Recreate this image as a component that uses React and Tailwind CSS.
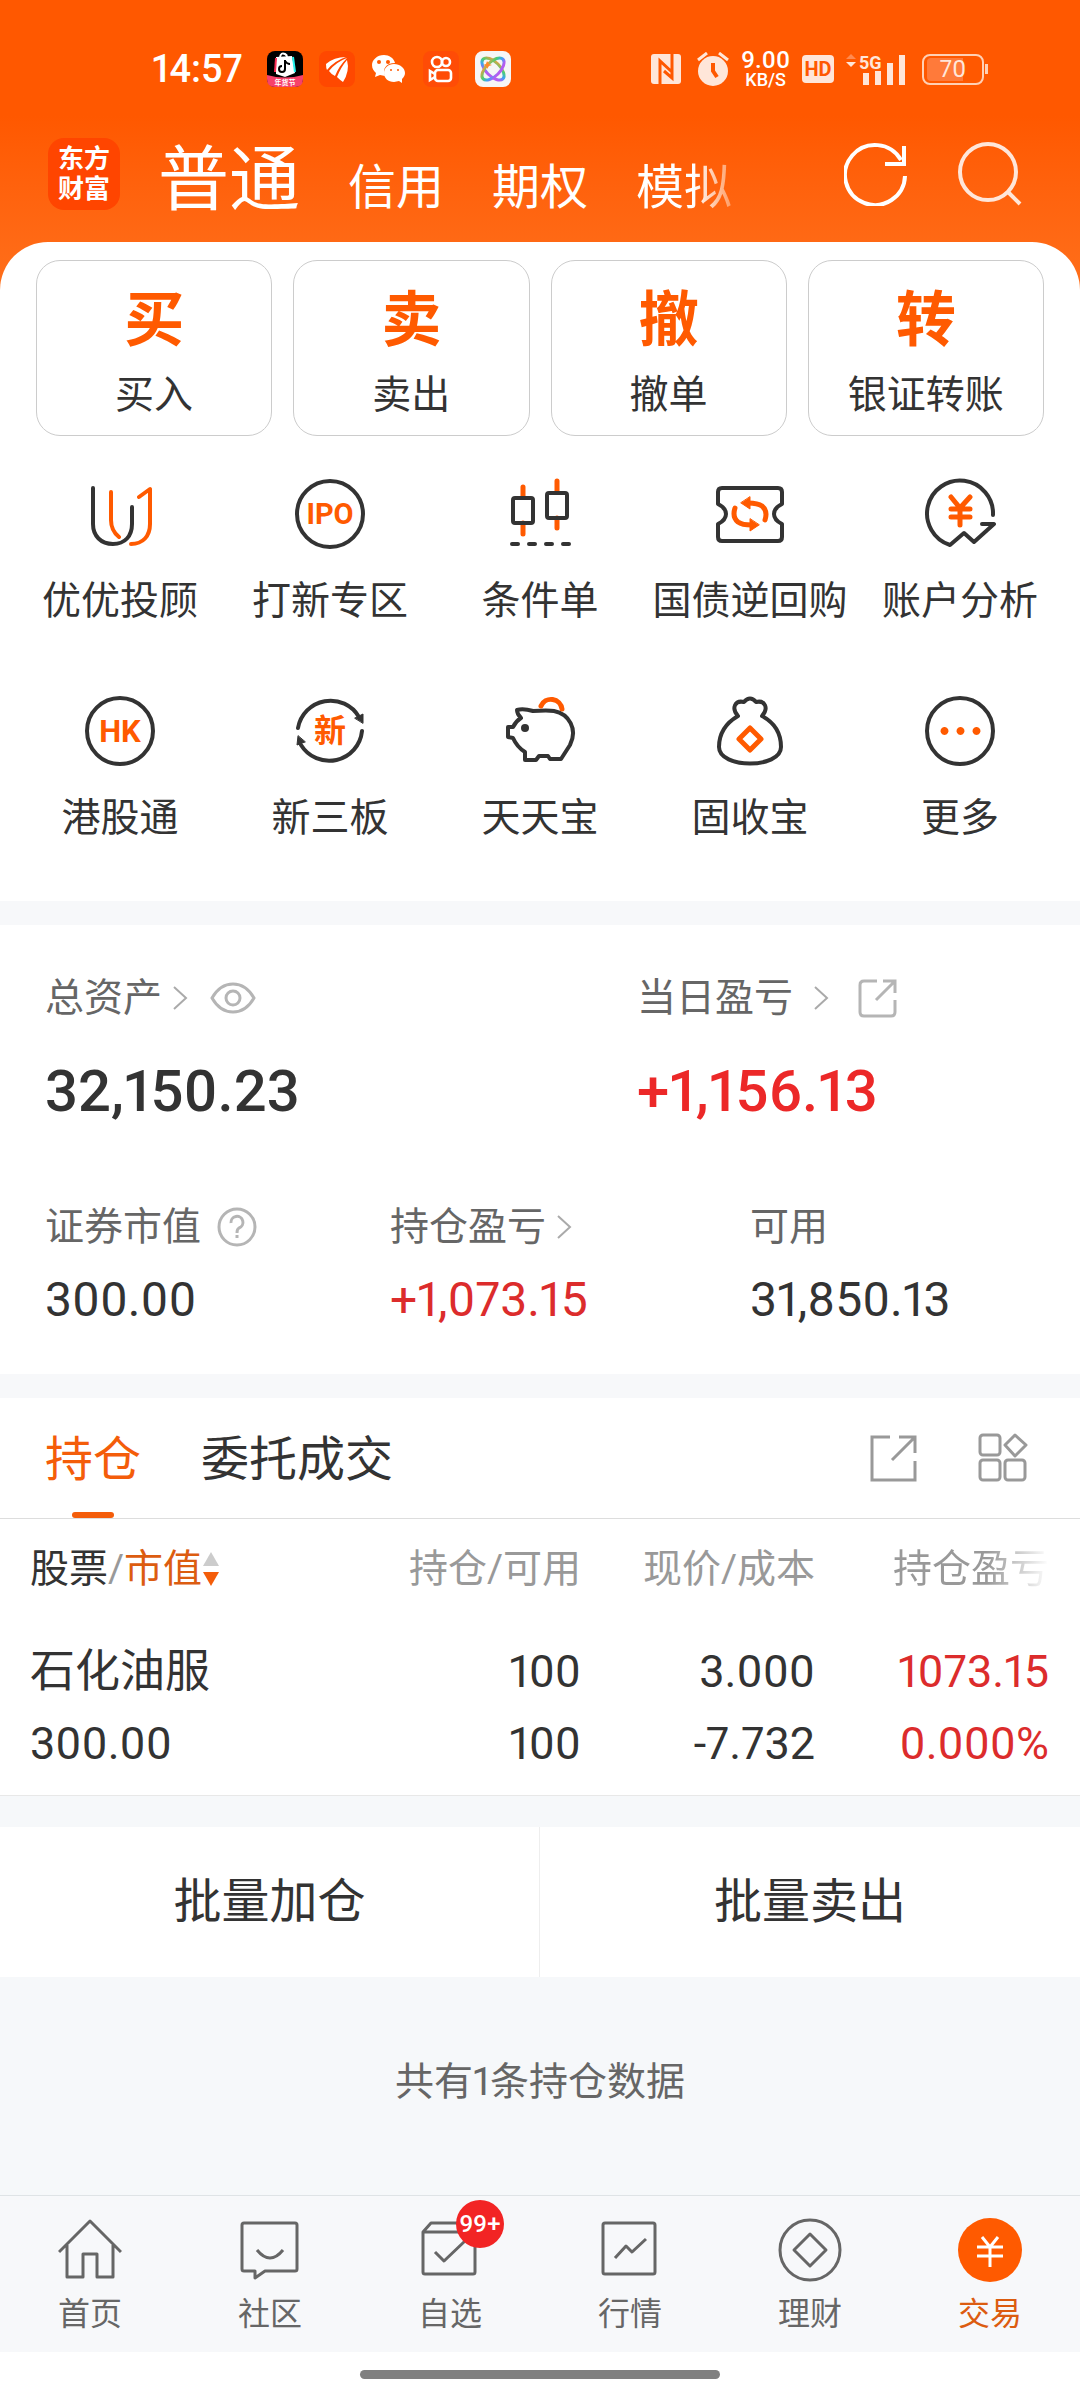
import React, { useState } from 'react';

const Yuan = ({ className, width }) => (
  <path d="M27 19L36 30L46 19M36 30V47M27 31H46M27 39H46" fill="none" className={className} strokeWidth={width} />
);

const quickActions = [
  { mark: '买', label: '买入' },
  { mark: '卖', label: '卖出' },
  { mark: '撤', label: '撤单' },
  { mark: '转', label: '银证转账' },
];

const services = [
  {
    label: '优优投顾',
    icon: (
      <>
        <path d="M9 10V46C9 58 17 66 29 66S48 58 48 46V29" />
        <path d="M27 14V42C27 50 30 55 35 59M55 19L66 11V46C66 58 59 66 47 66" className="stroke-[#ff5a00]" />
      </>
    ),
  },
  {
    label: '打新专区',
    icon: (
      <>
        <circle cx="36" cy="36" r="33" />
        <text x="36" y="46" textAnchor="middle" fontSize="29" fontWeight="700" className="fill-[#ff5a00] stroke-none">IPO</text>
      </>
    ),
  },
  {
    label: '条件单',
    icon: (
      <>
        <path d="M19 9V19M19 45V56M53 3V14M53 40V50" className="stroke-[#ff5a00]" strokeWidth="5" />
        <rect x="9" y="20" width="20" height="25" rx="2" />
        <rect x="43" y="15" width="20" height="25" rx="2" />
        <path d="M8 66H14M25 66H31M42 66H48M59 66H65" />
      </>
    ),
  },
  {
    label: '国债逆回购',
    icon: (
      <>
        <path d="M8 10H64Q68 10 68 14V26Q60 30 60 36T68 46V59Q68 63 64 63H8Q4 63 4 59V46Q12 42 12 36T4 26V14Q4 10 8 10Z" />
        <path d="M21 30Q18 39 24 44Q28 47 38 47M51 42Q54 33 48 28Q44 25 34 25" className="stroke-[#ff5a00]" strokeWidth="5" />
        <path d="M36 19V31L27 25ZM36 41V53L45 47Z" className="fill-[#ff5a00] stroke-[#ff5a00]" strokeWidth="1" />
      </>
    ),
  },
  {
    label: '账户分析',
    icon: (
      <>
        <path d="M69 37A33 33 0 1 0 26 67L40 55L50 64L70 46H58" />
        <Yuan className="stroke-[#ff5a00]" width="5" />
      </>
    ),
  },
  {
    label: '港股通',
    icon: (
      <>
        <circle cx="36" cy="36" r="33" />
        <text x="36" y="47" textAnchor="middle" fontSize="31" fontWeight="700" className="fill-[#ff5a00] stroke-none">HK</text>
      </>
    ),
  },
  {
    label: '新三板',
    icon: (
      <>
        <path d="M4 33A33 33 0 0 1 65 22M68 36A33 33 0 0 1 7 50" />
        <path d="M61 23L69 19V28ZM11 47L3 50L4 41Z" className="fill-[#333]" strokeWidth="1" />
        <text x="36" y="47" textAnchor="middle" fontSize="32" fontWeight="700" className="fill-[#ff5a00] stroke-none">新</text>
      </>
    ),
  },
  {
    label: '天天宝',
    icon: (
      <>
        <path d="M13 15Q19 13 29 16Q44 15 50 16C65 19 74 34 66 50L57 64H46L44 61H35L32 65H21V57Q13 52 9 43L4 42V32H9Q12 26 17 23Q13 19 13 15Z" />
        <circle cx="21" cy="33" r="4" className="fill-[#333] stroke-none" />
        <path d="M37 11A11 11 0 0 1 58 14" className="stroke-[#ff5a00]" strokeWidth="5" />
      </>
    ),
  },
  {
    label: '固收宝',
    icon: (
      <>
        <path d="M24 21C17 13 21 5 30 7Q36 0 42 7C51 5 55 13 48 21C61 28 67 39 67 52C67 74 5 74 5 52C5 39 12 28 24 21Z" />
        <path d="M36 33L47 44L36 55L25 44Z" className="stroke-[#ff5a00]" strokeWidth="5" />
      </>
    ),
  },
  {
    label: '更多',
    icon: (
      <>
        <circle cx="36" cy="36" r="33" />
        <path d="M20 32a4 4 0 1 0 1 0ZM36 32a4 4 0 1 0 1 0ZM52 32a4 4 0 1 0 1 0Z" className="fill-[#ff5a00] stroke-none" />
      </>
    ),
  },
];

const navItems = [
  { label: '首页', icon: <path d="M1 34L32 3L63 34M9 27V59H25V36H39V59H55V27" /> },
  {
    label: '社区',
    icon: <path d="M6 5H57Q59 5 59 7V51Q59 53 57 53H27L17 60V53H6Q4 53 4 51V7Q4 5 6 5ZM19 32Q32 48 45 32" />,
  },
  {
    label: '自选',
    badge: '99+',
    icon: <path d="M5 14L13 5H49L57 14V54Q57 56 55 56H7Q5 56 5 54ZH57M17 34L26 43L47 23" />,
  },
  {
    label: '行情',
    icon: <path d="M7 5H55Q57 5 57 7V54Q57 56 55 56H7Q5 56 5 54V7Q5 5 7 5ZM17 40L28 28L34 34L48 21" />,
  },
  {
    label: '理财',
    icon: (
      <>
        <circle cx="32" cy="32" r="30" />
        <path d="M32 16L48 32L32 48L16 32Z" />
      </>
    ),
  },
  {
    label: '交易',
    active: true,
    icon: (
      <>
        <circle cx="32" cy="32" r="32" className="fill-[#ff5a00] stroke-none" />
        <path d="M24 19L32 29L40 19M32 29V49M19 29H45M19 38H45" className="stroke-white" />
      </>
    ),
  },
];

const Chevron = () => (
  <svg className="h-6 w-4" viewBox="0 0 16 24" fill="none" stroke="#aaa" strokeWidth="2">
    <path d="M2 1L14 12L2 23" />
  </svg>
);

function StatusBar() {
  return (
    <div className="flex h-[120px] items-center justify-between pt-[18px] pr-[92px] pl-[152px] text-white">
      <div className="flex items-center gap-4">
        <span className="mr-2 text-[38px] leading-[40px] font-medium">14:57</span>
        <svg className="size-9" viewBox="0 0 36 36">
          <rect width="36" height="36" rx="8" fill="#000" />
          <path d="M0 24Q18 29 36 24V28Q36 36 28 36H8Q0 36 0 28Z" fill="#f7416b" />
          <path d="M9 6L25 5L28 22L18 26L9 23Z" fill="#fff" />
          <path d="M9 7L8 21" stroke="#fe2c55" strokeWidth="2" />
          <path d="M26 6L28 21" stroke="#25f4ee" strokeWidth="2" />
          <path d="M13 6Q14 1 18 3Q20 4 20 6" fill="none" stroke="#fff" strokeWidth="2" />
          <path d="M18 9V18A3 3 0 1 1 15 15M18 10Q20 13 23 13" fill="none" stroke="#000" strokeWidth="2" />
          <text x="18" y="34" fontSize="7" textAnchor="middle" fill="#fff" fontWeight="700">年货节</text>
        </svg>
        <svg className="size-9" viewBox="0 0 36 36">
          <rect width="36" height="36" rx="8" fill="#ff4800" />
          <path d="M7 13Q15 6 27 6Q15 10 8 19Q7 17 7 13ZM10 20Q17 11 28 7Q20 15 16 25Q12 23 10 20ZM18 26Q22 16 28 9Q31 20 24 31Q21 29 18 26Z" fill="#fff" />
        </svg>
        <svg className="size-9" viewBox="0 0 36 36" fill="#fff">
          <path d="M13 4C6 4 1 9 1 14C1 18 3 20 5 22L4 26L9 24L14 25C11 18 15 12 24 12C23 7 18 4 13 4Z" />
          <path d="M23 13C17 13 13 17 13 22S17 31 23 31L28 30L31 32L31 28C33 26 34 24 34 22C34 17 29 13 23 13Z" />
          <g fill="#ff5800">
            <circle cx="8" cy="11" r="2" />
            <circle cx="17" cy="11" r="2" />
            <circle cx="20" cy="19" r="1" />
            <circle cx="27" cy="19" r="1" />
          </g>
        </svg>
        <svg className="size-9" viewBox="0 0 36 36">
          <rect width="36" height="36" rx="8" fill="#ff4c06" />
          <g fill="none" stroke="#fff" strokeWidth="2.6">
            <circle cx="14" cy="11" r="5" />
            <circle cx="23" cy="11" r="4" />
            <rect x="12" y="19" width="16" height="11" rx="3" />
            <path d="M12 23L7 20V29L12 26" />
          </g>
        </svg>
        <svg className="size-9" viewBox="0 0 36 36">
          <defs>
            <linearGradient id="orbit" x1="0" y1="0" x2="0.4" y2="1">
              <stop offset="0" stopColor="#ff9a3c" />
              <stop offset="0.4" stopColor="#4fcf70" />
              <stop offset="0.7" stopColor="#3aa5f5" />
              <stop offset="1" stopColor="#b65cf0" />
            </linearGradient>
          </defs>
          <rect width="36" height="36" rx="8" fill="#f6f6f6" />
          <g fill="none" stroke="url(#orbit)" strokeWidth="3">
            <ellipse cx="18" cy="18" rx="14" ry="7" transform="rotate(45 18 18)" />
            <ellipse cx="18" cy="18" rx="14" ry="7" transform="rotate(-45 18 18)" />
          </g>
          <path d="M12 10L14 13L17 14L14 15L12 18L11 15L8 14L11 13Z" fill="#ff8a2a" />
        </svg>
      </div>
      <div className="flex items-center gap-3">
        <svg className="mr-1 h-[30px] w-[30px]" viewBox="0 0 30 30">
          <rect width="30" height="30" rx="3" fill="#ffe6d9" />
          <path d="M9 30V7L21 18M21 0V24L13 17" fill="none" stroke="#ff5800" strokeWidth="3" />
        </svg>
        <svg className="h-[34px] w-8" viewBox="0 0 32 34">
          <circle cx="16" cy="19" r="15" fill="#ffe6d9" />
          <path d="M1 8L10 1M31 8L22 1" stroke="#ffe6d9" strokeWidth="3" />
          <path d="M16 11V19L20 25" fill="none" stroke="#ff5800" strokeWidth="4" />
        </svg>
        <div className="flex flex-col items-center font-medium">
          <span className="text-[24px] leading-[22px]">9.00</span>
          <span className="text-[18px] leading-[18px]">KB/S</span>
        </div>
        <span className="flex h-7 w-8 items-center justify-center rounded bg-[#ffe6d9] text-[20px] leading-none font-bold text-[#ff5800]">HD</span>
        <svg className="h-9 w-[60px]" viewBox="0 0 60 36">
          <path d="M0 8L5 3L10 8Z" fill="#ff8a50" />
          <path d="M0 11H10L5 16Z" fill="#ffe6d9" />
          <path d="M17 22h6v12h-6ZM29 20h6v14h-6ZM41 12h6v22h-6ZM53 4h6v30h-6Z" fill="#ffe6d9" />
          <text x="13" y="18" fontSize="18" fontWeight="700" fill="#ffe6d9">5G</text>
        </svg>
        <div className="ml-1 flex items-center">
          <span className="flex h-[31px] w-[62px] items-center justify-center rounded-lg border-2 border-[#ffd0b5] text-[24px] leading-none text-[#ffe6d9]">
            <span className="w-[52px] rounded bg-gradient-to-r from-[#ff7a3a] from-70% to-transparent to-70% text-center leading-[23px]">70</span>
          </span>
          <span className="ml-px h-2.5 w-[3px] bg-[#ffd0b5]" />
        </div>
      </div>
    </div>
  );
}

function Header() {
  return (
    <div className="flex h-[122px] items-start pt-[18px] pr-[58px] pl-12 text-white">
      <div className="flex size-[72px] flex-col items-center justify-center rounded-2xl bg-[#ff4500] text-[26px] leading-[30px] font-bold">
        <span>东方</span>
        <span>财富</span>
      </div>
      <div className="ml-[38px] flex flex-1 items-baseline gap-12 pt-1.5 text-[48px] leading-[72px] whitespace-nowrap">
        <button className="text-[71px]">普通</button>
        <button>信用</button>
        <button>期权</button>
        <button className="bg-gradient-to-r from-white from-60% to-[#ff9a60] bg-clip-text text-transparent">模拟</button>
      </div>
      <button aria-label="刷新" className="mt-1 mr-[50px]">
        <svg className="size-16" viewBox="0 0 64 64" fill="none" stroke="#fff" strokeWidth="4">
          <path d="M61 34A30 30 0 1 1 57 18M60 4V22H41" />
        </svg>
      </button>
      <button aria-label="搜索" className="mt-1">
        <svg className="size-16" viewBox="0 0 64 64" fill="none" stroke="#ffe6d9" strokeWidth="4">
          <circle cx="30" cy="30" r="28" />
          <path d="M49 49L62 62" />
        </svg>
      </button>
    </div>
  );
}

function Assets() {
  return (
    <section className="px-[45px] py-12 text-[39px] leading-[50px] text-[#666]">
      <div className="grid grid-cols-[592px_1fr]">
        <div>
          <div className="flex items-center">
            <span className="mr-[10px]">总资产</span>
            <Chevron />
            <button aria-label="隐藏金额" className="ml-[22px]">
              <svg className="h-8 w-[46px]" viewBox="0 0 46 32" fill="none" stroke="#b5b5b5" strokeWidth="3">
                <path d="M2 16Q10 2 23 2T44 16Q36 30 23 30T2 16Z" />
                <circle cx="23" cy="16" r="7" />
              </svg>
            </button>
          </div>
          <div className="mt-8 text-[58px] leading-[72px] font-medium text-[#333]">32,150.23</div>
        </div>
        <div>
          <div className="flex items-center">
            <span className="mr-[20px]">当日盈亏</span>
            <Chevron />
            <button aria-label="分享" className="ml-7">
              <svg className="size-10" viewBox="0 0 40 40" fill="none" stroke="#b5b5b5" strokeWidth="3">
                <path d="M20 3H7Q3 3 3 7V34Q3 38 7 38H34Q38 38 38 34V22M19 22L37 4M26 3H38V15" />
              </svg>
            </button>
          </div>
          <div className="mt-8 text-[58px] leading-[72px] font-medium text-[#ec2828]">+1,156.13</div>
        </div>
      </div>
      <div className="mt-[75px] grid grid-cols-[345px_360px_1fr]">
        <div>
          <div className="flex items-center">
            <span className="mr-4">证券市值</span>
            <button aria-label="说明">
              <svg className="size-10" viewBox="0 0 40 40" fill="none" stroke="#b5b5b5" strokeWidth="3">
                <circle cx="20" cy="20" r="18" />
                <path d="M14 16A6 6 0 1 1 22 21Q20 22 20 26M20 28V31" />
              </svg>
            </button>
          </div>
          <div className="mt-[22px] text-[48px] leading-[52px] text-[#333]">300.00</div>
        </div>
        <div>
          <div className="flex items-center">
            <span className="mr-[10px]">持仓盈亏</span>
            <Chevron />
          </div>
          <div className="mt-[22px] text-[48px] leading-[52px] text-[#dc2c2c]">+1,073.15</div>
        </div>
        <div>
          <div>可用</div>
          <div className="mt-[22px] text-[48px] leading-[52px] text-[#333]">31,850.13</div>
        </div>
      </div>
    </section>
  );
}

function Holdings({ tab, setTab }) {
  return (
    <section>
      <div className="flex h-[121px] items-stretch border-b border-[#ddd] pr-[52px] pl-[45px] text-[48px]">
        {['持仓', '委托成交'].map((name) => (
          <button
            key={name}
            onClick={() => setTab(name)}
            className={tab === name ? 'mr-[60px] flex flex-col items-center text-[#f45d0a]' : 'mr-[60px] flex flex-col items-center text-[#333]'}
          >
            <span className="flex-1 pt-[26px] leading-[72px]">{name}</span>
            {tab === name && <span className="h-1.5 w-[42px] rounded-full bg-[#f45d0a]" />}
          </button>
        ))}
        <button aria-label="分享持仓" className="ml-auto">
          <svg className="size-12" viewBox="0 0 48 48" fill="none" stroke="#999" strokeWidth="3">
            <path d="M20 3H2V46H45V27M22 26L45 3M29 3H45V19" />
          </svg>
        </button>
        <button aria-label="布局" className="ml-[60px]">
          <svg className="size-[50px]" viewBox="0 0 50 50" fill="none" stroke="#999" strokeWidth="3">
            <rect x="2" y="2" width="20" height="20" rx="3" />
            <rect x="2" y="27" width="20" height="20" rx="3" />
            <rect x="27" y="27" width="20" height="20" rx="3" />
            <path d="M37 2L48 12L37 23L27 12Z" strokeLinejoin="round" />
          </svg>
        </button>
      </div>
      <table className="w-full table-fixed border-b border-[#e8e8e8] text-[45px] leading-[72px] text-[#333]">
        <thead>
          <tr className="h-[100px] text-[39px] text-[#999]">
            <th className="pl-[30px] text-left font-normal">
              <button className="flex items-center">
                <span className="text-[#333]">股票</span>/<span className="text-[#dc5c10]">市值</span>
                <svg className="h-[34px] w-[18px]" viewBox="0 0 18 34">
                  <path d="M9 0L17 14H1Z" fill="#ccc" />
                  <path d="M9 34L17 20H1Z" fill="#f45d0a" />
                </svg>
              </button>
            </th>
            <th className="w-[234px] text-right font-normal">持仓/可用</th>
            <th className="w-[234px] text-right font-normal">现价/成本</th>
            <th className="w-[265px] pr-[31px] text-right font-normal">
              <span className="bg-gradient-to-r from-[#999] from-60% to-white bg-clip-text text-transparent">持仓盈亏</span>
            </th>
          </tr>
        </thead>
        <tbody>
          <tr className="h-[89px] align-bottom">
            <td className="pl-[30px]">石化油服</td>
            <td className="text-right">100</td>
            <td className="text-right">3.000</td>
            <td className="pr-[31px] text-right text-[#dc2c2c]">1073.15</td>
          </tr>
          <tr className="h-[87px] align-top">
            <td className="pl-[30px]">300.00</td>
            <td className="text-right">100</td>
            <td className="text-right">-7.732</td>
            <td className="pr-[31px] text-right text-[#dc2c2c]">0.000%</td>
          </tr>
        </tbody>
      </table>
    </section>
  );
}

function BottomNav() {
  return (
    <nav className="grid grid-cols-6 border-t border-[#dfe3e6] bg-[#f7f8fa] pt-[22px] pb-[18px]">
      {navItems.map((item) => (
        <a key={item.label} href="#" className="flex flex-col items-center gap-3">
          <span className="relative">
            <svg className="size-16" viewBox="0 0 64 64" fill="none" stroke="#666" strokeWidth="3" strokeLinejoin="round">
              {item.icon}
            </svg>
            {item.badge && (
              <span className="absolute -top-[18px] left-[38px] flex size-12 items-center justify-center rounded-full bg-[#f22424] text-[24px] leading-none font-medium text-white">
                {item.badge}
              </span>
            )}
          </span>
          <span className={item.active ? 'text-[32px] leading-[40px] text-[#dc5c10]' : 'text-[32px] leading-[40px] text-[#666]'}>{item.label}</span>
        </a>
      ))}
    </nav>
  );
}

export default function App() {
  const [tab, setTab] = useState('持仓');

  return (
    <div className="flex min-h-screen flex-col bg-white font-[Roboto,'Noto_Sans_CJK_SC',sans-serif] text-[#333] proportional-nums">
      <header className="bg-gradient-to-b from-[#ff5800] from-40% to-[#ff6f1a] pb-12">
        <StatusBar />
        <Header />
      </header>

      <main className="-mt-12 flex flex-1 flex-col rounded-t-[48px] bg-white">
        <section className="pt-[18px] pb-[59px]">
          <div className="grid grid-cols-4 gap-[21px] px-9">
            {quickActions.map((action) => (
              <button key={action.mark} className="flex h-[176px] flex-col items-center rounded-3xl border border-[#ccc] pt-[22px]">
                <span className="text-[60px] leading-[76px] font-bold text-[#ff5a00]">{action.mark}</span>
                <span className="mt-3 text-[39px] leading-[48px]">{action.label}</span>
              </button>
            ))}
          </div>
          <div className="mt-[42px] grid grid-cols-5 gap-y-[70px] px-[15px]">
            {services.map((service) => (
              <button key={service.label} className="flex flex-col items-center gap-[27px] whitespace-nowrap">
                <svg className="size-[72px]" viewBox="0 0 72 72" fill="none" stroke="#333" strokeWidth="4" strokeLinecap="round" strokeLinejoin="round">
                  {service.icon}
                </svg>
                <span className="text-[39px] leading-[48px]">{service.label}</span>
              </button>
            ))}
          </div>
        </section>

        <div className="h-6 bg-[#f7f8fa]" />
        <Assets />
        <div className="h-6 bg-[#f7f8fa]" />
        <Holdings tab={tab} setTab={setTab} />

        <div className="flex flex-1 flex-col bg-[#f6f8fa] pt-[31px]">
          <div className="grid grid-cols-2 divide-x divide-[#eee] bg-white text-[48px] leading-[150px]">
            <button>批量加仓</button>
            <button>批量卖出</button>
          </div>
          <p className="flex flex-1 items-center justify-center pb-2 text-[39px] leading-[60px] text-[#666]">共有1条持仓数据</p>
        </div>
      </main>

      <BottomNav />
      <div className="flex h-12 justify-center bg-white pt-[18px]">
        <span className="h-[9px] w-1/3 rounded-full bg-[#808080]" />
      </div>
    </div>
  );
}
